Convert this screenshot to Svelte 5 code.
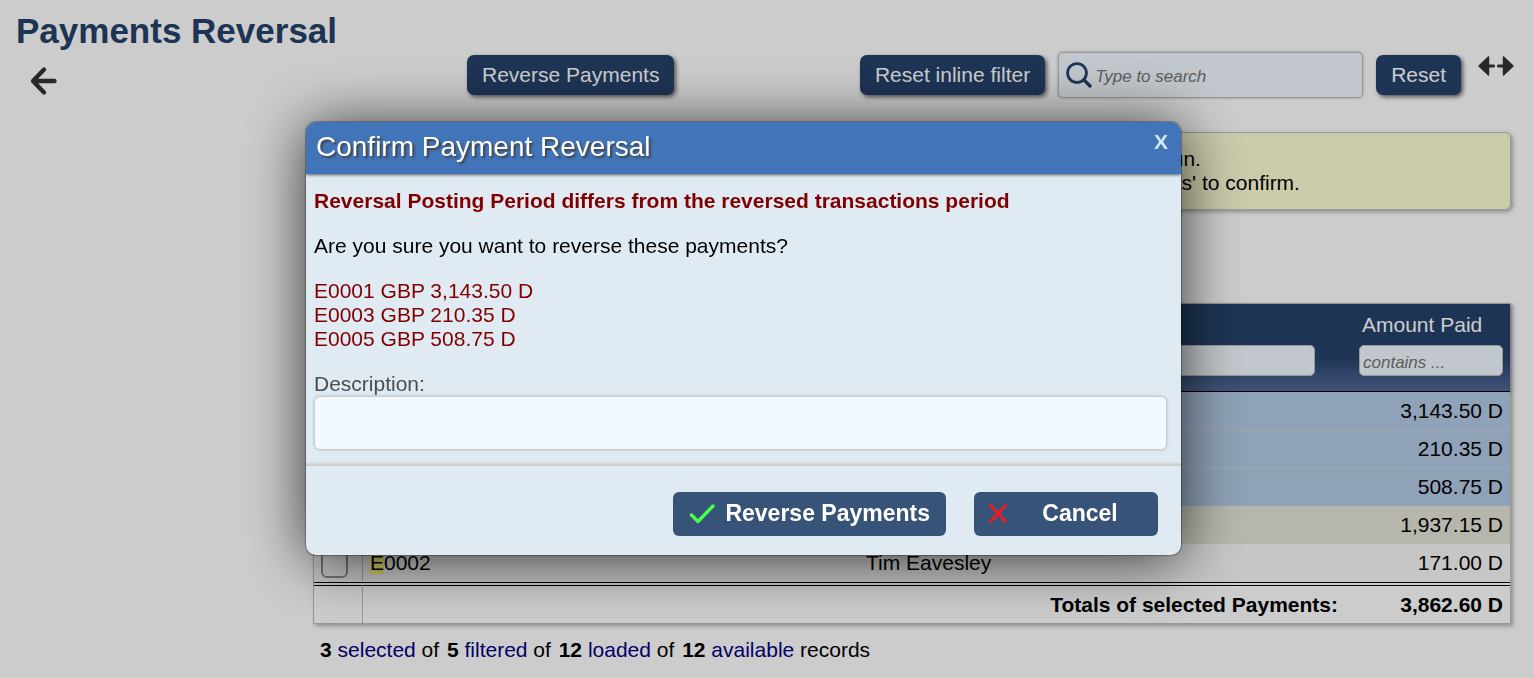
<script lang="ts">
	interface Payment {
		ref: string;
		payee: string;
		amount: string;
		selected: boolean;
	}

	const payments: Payment[] = $state([
		{ ref: 'E0001', payee: '', amount: '3,143.50 D', selected: true },
		{ ref: 'E0003', payee: '', amount: '210.35 D', selected: true },
		{ ref: 'E0005', payee: '', amount: '508.75 D', selected: true },
		{ ref: 'E0004', payee: '', amount: '1,937.15 D', selected: false },
		{ ref: 'E0002', payee: 'Tim Eavesley', amount: '171.00 D', selected: false },
	]);

	let description = $state('');
	let search = $state('');
	let open = $state(true);

	const selected = $derived(payments.filter((p) => p.selected));

	function close() {
		open = false;
	}
</script>

<div class="page">
	<h1>Payments Reversal</h1>

	<div class="toolbar">
		<button class="icon-button back" aria-label="Back">
			<svg width="28" height="30" viewBox="0 0 28 30" fill="none" stroke="#333" stroke-width="4.400" stroke-linecap="round" stroke-linejoin="round">
				<path d="M15 3.500 4 15l11 11.500M5 15h20.500" />
			</svg>
		</button>
		<button class="button reverse" onclick={() => (open = true)}>Reverse Payments</button>

		<div class="toolbar__filters">
			<button class="button">Reset inline filter</button>
			<div class="search">
				<svg width="26" height="26" viewBox="0 0 26 26" fill="none" stroke="#25426a" stroke-width="2.800" stroke-linecap="round">
					<circle cx="11" cy="11" r="9.400" />
					<path d="m18 18 6 6" stroke-width="3.400" />
				</svg>
				<input type="text" aria-label="Search" placeholder="Type to search" bind:value={search} />
			</div>
			<button class="button" onclick={() => (search = '')}>Reset</button>
			<button class="icon-button wide" aria-label="Toggle width">
				<svg width="36" height="20" viewBox="0 0 36 20" fill="#333" stroke="#333" stroke-linejoin="round" stroke-linecap="round">
					<path d="M1 10 10.500 1v18zM35 10 25.500 1v18z" stroke-width="1.500" />
					<path d="M10 10h5.500M20.500 10H26" stroke-width="3" />
				</svg>
			</button>
		</div>
	</div>

	<main>
		<div class="notice">
			<p>
				Reversed items return to the next payment run.<br />
				Select payments and click 'Reverse Payments' to confirm.
			</p>
		</div>

		<table>
			<colgroup>
				<col class="col-check" />
				<col />
				<col class="col-payee" />
				<col class="col-amount" />
			</colgroup>
			<thead>
				<tr>
					<th></th>
					<th>
						<label for="filter-ref">Reference</label>
						<input id="filter-ref" type="text" value="E" />
					</th>
					<th>
						<label for="filter-payee">Payee</label>
						<input id="filter-payee" type="text" />
					</th>
					<th class="amount-head">
						<label for="filter-amount">Amount Paid</label>
						<input id="filter-amount" type="text" placeholder="contains ..." />
					</th>
				</tr>
			</thead>
			<tbody>
				{#each payments as payment (payment.ref)}
					<tr class:selected={payment.selected}>
						<td class="check">
							<input type="checkbox" aria-label={payment.ref} bind:checked={payment.selected} />
						</td>
						<td><mark>{payment.ref[0]}</mark>{payment.ref.slice(1)}</td>
						<td>{payment.payee}</td>
						<td class="amount">{payment.amount}</td>
					</tr>
				{/each}
			</tbody>
			<tfoot>
				<tr>
					<td class="check"></td>
					<td colspan="2" class="totals">Totals of selected Payments:</td>
					<td class="amount">3,862.60 D</td>
				</tr>
			</tfoot>
		</table>

		<p class="counts">
			<b>3</b> <a href="#selected">selected</a> of <b>5</b> <a href="#filtered">filtered</a> of
			<b>12</b> <a href="#loaded">loaded</a> of <b>12</b> <a href="#available">available</a> records
		</p>
	</main>
</div>

{#if open}
	<div class="overlay">
		<div class="dialog" role="dialog" aria-modal="true" aria-labelledby="dialog-title">
			<header>
				<h2 id="dialog-title">Confirm Payment Reversal</h2>
				<button class="close" aria-label="Close" onclick={close}>X</button>
			</header>

			<div class="dialog__body">
				<p class="warning">Reversal Posting Period differs from the reversed transactions period</p>
				<p>Are you sure you want to reverse these payments?</p>
				<ul>
					{#each selected as payment (payment.ref)}
						<li>{payment.ref} GBP {payment.amount}</li>
					{/each}
				</ul>
				<label for="description">Description:</label>
				<input id="description" type="text" bind:value={description} />
			</div>

			<footer>
				<button class="action" onclick={close}>
					<svg width="26" height="22" viewBox="0 0 26 22" fill="none" stroke="#4cff4c" stroke-width="3.400" stroke-linecap="round" stroke-linejoin="round">
						<path d="m2.500 13 6.500 6.500L24 4" />
					</svg>
					<span>Reverse Payments</span>
				</button>
				<button class="action cancel" onclick={close}>
					<svg width="20" height="22" viewBox="0 0 20 22" fill="none" stroke="#ed1c24" stroke-width="3" stroke-linecap="round">
						<path d="m2.500 3.500 15 16M17.500 3.500l-15 16" />
					</svg>
					<span>Cancel</span>
				</button>
			</footer>
		</div>
	</div>
{/if}

<style>
	:global(body) {
		background: #fff;
		color: #000;
		font-family: "Liberation Sans", Arial, sans-serif;
		font-size: 21px;
		line-height: 24px;
	}

	h1,
	h2,
	p,
	ul {
		margin: 0;
	}

	button,
	input {
		box-sizing: border-box;
		font: inherit;
	}

	button {
		border: 0;
		cursor: pointer;
	}

	.page {
		padding-top: 11px;
	}

	h1 {
		padding-left: 16px;
		color: #25426a;
		font-size: 35px;
		line-height: 40px;
	}

	.toolbar {
		display: flex;
		align-items: center;
		margin-top: 1px;
		padding: 0 20px 0 29px;
	}

	.toolbar__filters {
		display: flex;
		align-items: center;
		gap: 13px;
		margin-left: auto;
	}

	.icon-button {
		display: flex;
		padding: 0;
		background: none;
	}

	.back {
		align-self: flex-end;
		margin-bottom: 2px;
	}

	.wide {
		align-self: flex-start;
		margin: 4px 0 0 4px;
	}

	.button {
		padding: 8px 15px;
		border-radius: 7px;
		background: #25426a;
		box-shadow: 2px 2px 4px rgba(0, 0, 0, 0.6);
		color: #fff;
		white-space: nowrap;
	}

	.reverse {
		margin-left: 410px;
	}

	.search {
		display: flex;
		align-items: center;
		box-sizing: border-box;
		width: 305px;
		height: 46px;
		padding-left: 7px;
		border: 1px solid #bfbfbf;
		border-radius: 5px;
		background: #f2f9ff;
		box-shadow: 0 0 3px rgba(0, 0, 0, 0.3);

		input {
			flex: 1;
			min-width: 0;
			padding: 0 3px;
			border: 0;
			outline: 0;
			background: none;
		}
	}

	::placeholder {
		color: #757575;
		font-size: 17px;
		font-style: italic;
		opacity: 1;
	}

	main {
		margin: 34px 23px 0 313px;
	}

	.notice {
		display: flex;
		justify-content: center;
		margin-left: 238px;
		padding: 14px 0;
		border: 1px solid #bfbfbf;
		border-radius: 6px;
		background: #fdfed6;
		box-shadow: 2px 2px 4px rgba(0, 0, 0, 0.3);
	}

	table {
		width: 100%;
		margin-top: 93px;
		border: 1px solid #bfbfbf;
		border-spacing: 0;
		box-shadow: 2px 2px 4px rgba(0, 0, 0, 0.3);
		table-layout: fixed;
	}

	.col-check {
		width: 49px;
	}

	.col-payee {
		width: 493px;
	}

	.col-amount {
		width: 158px;
	}

	thead {
		background: linear-gradient(#25426a 60%, #546a99);
		box-shadow: 0 2px 4px rgba(0, 0, 0, 0.4);
	}

	th {
		padding: 9px 7px 15px;
		border-bottom: 1px solid #000;
		color: #fff;
		font-weight: normal;
		text-align: left;

		label {
			display: block;
			padding-left: 3px;
		}

		input {
			display: block;
			width: calc(100% - 30px);
			height: 31px;
			margin-top: 8px;
			padding: 0 3px;
			border: 1px solid #bfbfbf;
			border-radius: 5px;
			background: #f2f9ff;
		}
	}

	.amount-head input {
		width: 100%;
	}

	td {
		box-sizing: border-box;
		height: 38px;
		padding: 0 7px;
	}

	tbody tr {
		background: #f8f8f8;

		&:nth-child(even) {
			background: #e5e4d8;
		}

		&.selected {
			background: #b3cbe6;
		}
	}

	.selected + .selected td {
		box-shadow: inset 0 1px #c8d2dc;
	}

	.check {
		border-right: 1px solid #bfbfbf;

		input {
			display: block;
			width: 27px;
			height: 27px;
			margin: 2px 0 0;
			border: 2px solid #8a9299;
			border-radius: 6px;
			appearance: none;
			background: #f8f8f8;
		}
	}

	mark {
		background: #ffff7a;
		color: inherit;
	}

	.amount {
		text-align: right;
	}

	tfoot td {
		height: 41px;
		border-top: 4px double #000;
		font-weight: bold;
	}

	.totals {
		padding-right: 14px;
		text-align: right;
	}

	.counts {
		margin-top: 14px;
		padding-left: 5px;

		a {
			color: #00007f;
			text-decoration: none;
		}

		b {
			margin-left: 2px;
		}
	}

	.overlay {
		position: fixed;
		inset: 0;
		display: flex;
		align-items: center;
		justify-content: center;
		padding: 0 47px 2px 0;
		background: rgba(0, 0, 0, 0.2);
	}

	.dialog {
		width: 875px;
		overflow: hidden;
		border-radius: 10px;
		background: #e0eaf3;
		box-shadow: 0 0 1px 1px rgba(0, 0, 0, 0.3), 0 4px 60px rgba(0, 0, 0, 0.75);
	}

	header {
		display: flex;
		align-items: flex-start;
		justify-content: space-between;
		height: 52px;
		padding: 0 13px 0 10px;
		background: #4174b9;
		box-shadow: 0 1px 3px rgba(0, 0, 0, 0.6);
	}

	h2 {
		color: #fff;
		font-size: 28px;
		font-weight: normal;
		line-height: 50px;
		text-shadow: 2px 2px 2px #444;
	}

	.close {
		margin-top: 8px;
		padding: 0;
		background: none;
		color: #d5e3f5;
		font-weight: bold;
	}

	.dialog__body {
		padding: 15px 14px 12px 8px;

		p,
		ul {
			margin-bottom: 21px;
		}

		ul {
			padding: 0;
			color: #800000;
			list-style: none;
		}

		.warning {
			color: #800000;
			font-weight: bold;
		}

		label {
			display: block;
			color: #4d4d4d;
		}

		input {
			display: block;
			width: 100%;
			height: 54px;
			padding: 0 10px;
			border: 1px solid #ccc;
			border-radius: 6px;
			background: #f2f9ff;
			box-shadow: 0 0 3px rgba(0, 0, 0, 0.2);
		}
	}

	footer {
		display: flex;
		justify-content: flex-end;
		gap: 28px;
		padding: 30px 23px 19px;
		background: linear-gradient(#dde3e8, #c8c8c8 4px, transparent 4px);
	}

	.action {
		display: flex;
		align-items: center;
		gap: 10px;
		padding: 9px 16px 11px;
		border-radius: 6px;
		background: #375378;
		color: #fff;
		font-size: 23px;
		font-weight: bold;

		span {
			flex: 1;
		}
	}

	.cancel {
		width: 184px;
		padding-left: 14px;
	}
</style>
